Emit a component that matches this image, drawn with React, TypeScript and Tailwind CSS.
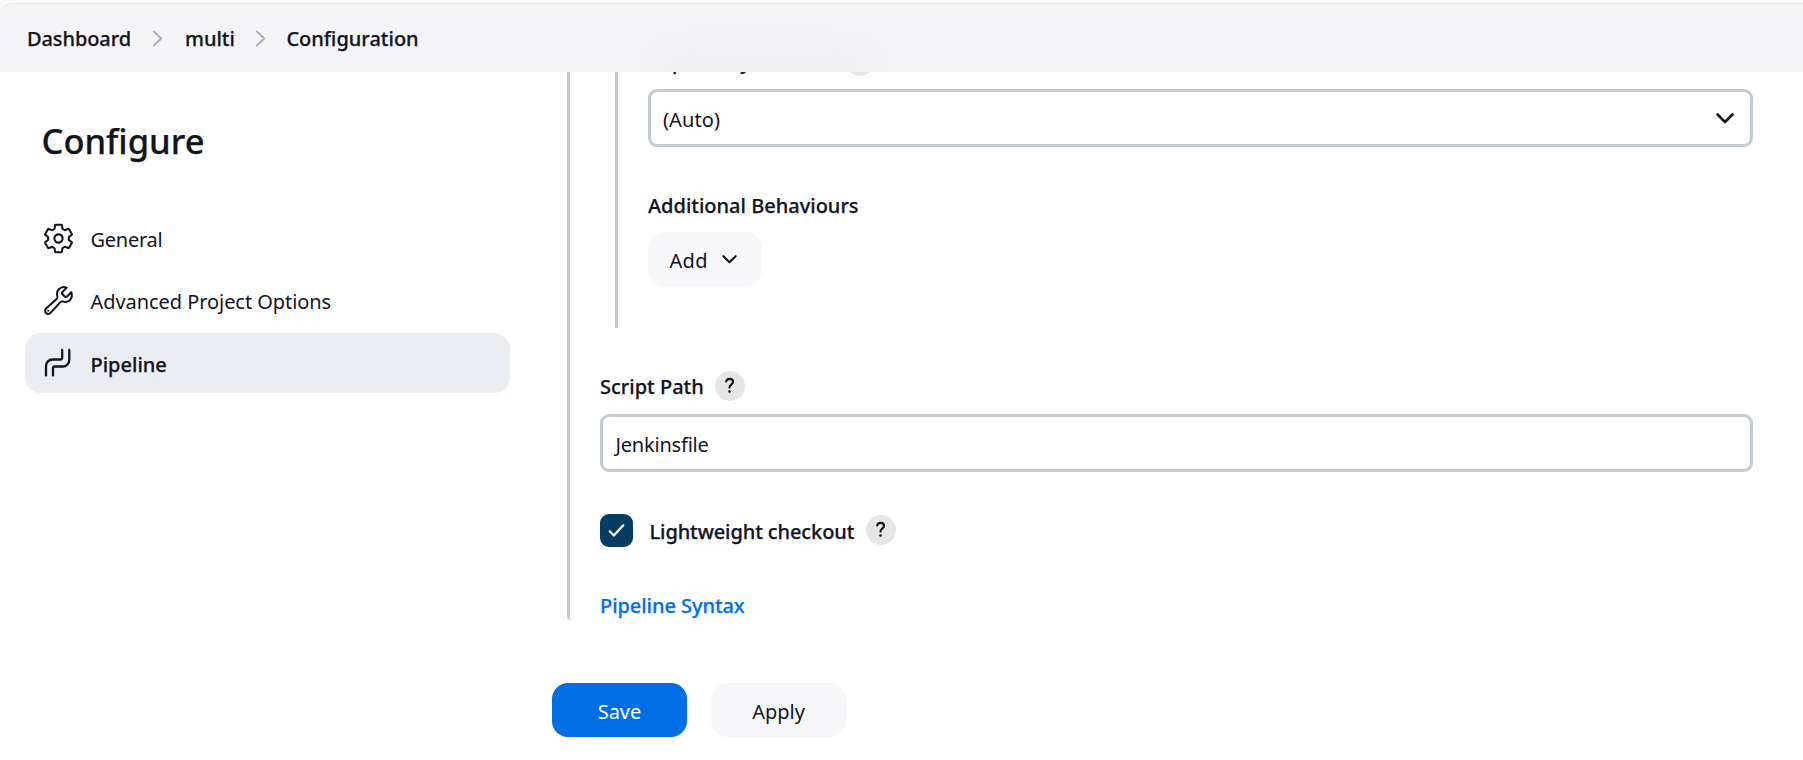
import type { ReactNode } from "react";
import { IoBuildOutline, IoSettingsOutline } from "react-icons/io5";

function Chevron({ className, width = 2, down = false }: { className: string; width?: number; down?: boolean }) {
  return (
    <svg className={className} viewBox={down ? "0 0 18 11" : "0 0 11 18"} fill="none" stroke="currentColor" strokeWidth={width} strokeLinecap="round" strokeLinejoin="round">
      <path d={down ? "M1.5 1.5 9 9l7.5-7.5" : "M1.5 1.5 9.5 9l-8 7.5"} />
    </svg>
  );
}

function PipelineIcon() {
  return (
    <svg className="h-[30px] w-[30px]" viewBox="0 0 30 30" fill="none" stroke="currentColor" strokeWidth="2.3" strokeLinecap="round" strokeLinejoin="round">
      <path d="M19.2 2V9.5a2 2 0 0 1-2 2H9.5A6.5 6.5 0 0 0 3 18V27.5" />
      <path d="M26.3 2V12a6.5 6.5 0 0 1-6.5 6.5H12a2 2 0 0 0-2 2V27.5" />
    </svg>
  );
}

function Help({ className = "" }: { className?: string }) {
  return (
    <button className={`flex h-[30px] w-[30px] items-center justify-center rounded-full bg-[#e6e6e6] ${className}`}>
      <svg className="h-[18px] w-[12px]" viewBox="0 0 12 18" fill="none" stroke="currentColor" strokeWidth="2.2" strokeLinecap="round" strokeLinejoin="round">
        <path d="M2.2 4.4C2.5 2.7 4 1.8 5.6 1.8c1.9 0 3.4 1.100 3.400 3 0 3-3.500 2.800-3.500 5.700" />
        <circle cx="5.5" cy="14.5" r=".7" fill="currentColor" strokeWidth="1.3" />
      </svg>
    </button>
  );
}

function Strong({ className = "", children }: { className?: string; children: ReactNode }) {
  return <span className={`font-medium [-webkit-text-stroke:0.25px_currentColor] ${className}`}>{children}</span>;
}

function NavItem({ icon, active = false, children }: { icon: ReactNode; active?: boolean; children: ReactNode }) {
  return (
    <a className={`flex h-[60px] items-center rounded-2xl pl-[16.5px] ${active ? "bg-[#ecedf3]" : ""}`}>
      <span className="mr-[16px] flex w-[33px] justify-center">{icon}</span>
      <span className="pt-[3px]">{children}</span>
    </a>
  );
}

export default function App() {
  return (
    <div className="relative h-[760px] overflow-hidden bg-white font-['Noto_Sans',sans-serif] text-[20px] leading-[28px] text-[#14141f]">
      <header className="absolute inset-x-0 top-0 z-10 h-[72px] overflow-hidden bg-[#f8f8f8] pt-[3px]">
        <nav className="flex h-[69px] items-center rounded-tl-xl border-t border-l border-[#e8e8e8] border-l-transparent bg-[#f5f5f8] pt-px pl-[26px]">
          <Strong className="tracking-[-0.1px]">Dashboard</Strong>
          <Chevron className="mr-[22px] mb-px ml-[21px] h-[17px] w-[11px] text-[#a9a9bd]" />
          <Strong>multi</Strong>
          <Chevron className="mr-[20.5px] mb-px ml-[20px] h-[17px] w-[11px] text-[#a9a9bd]" />
          <Strong>Configuration</Strong>
        </nav>
        <div className="absolute top-[46px] left-[650px] h-[40px] w-[225px] rounded-full bg-[#ededf0] opacity-80 blur-[16px]" />
      </header>

      <div className="flex h-full">
        <aside className="w-[510px] shrink-0 pt-[117px] pl-[25px]">
          <h1 className="pl-[16.5px] text-[34.5px] leading-[48px]">
            <Strong>Configure</Strong>
          </h1>
          <nav className="mt-[43px] flex flex-col gap-[2.5px]">
            <NavItem icon={<IoSettingsOutline className="h-[33px] w-[33px]" />}>
              <span className="tracking-[-0.25px]">General</span>
            </NavItem>
            <NavItem icon={<IoBuildOutline className="h-[33px] w-[33px]" />}>
              <span className="tracking-[-0.06px]">Advanced Project Options</span>
            </NavItem>
            <NavItem icon={<PipelineIcon />} active>
              <Strong>Pipeline</Strong>
            </NavItem>
          </nav>
        </aside>

        <main className="flex grow flex-col pr-[50px] pl-[42px]">
          <section className="ml-[15px] h-[620px] rounded-b-sm border-l-3 border-[#c3ccd1] pl-[30px]">
            <div className="ml-[15px] h-[328px] border-l-3 border-[#c3ccd1] pt-[46px] pl-[30px]">
              <div className="flex h-[30px] items-center">
                <Strong className="w-[197px] pt-[1px]">Repository browser</Strong>
                <Help />
              </div>
              <div className="mt-[13px] flex h-[58px] items-center justify-between rounded-[9px] border-3 border-[#c3ccd1] pr-[16px] pl-[12px]">
                <span className="pt-[3px] tracking-[0.1px]">(Auto)</span>
                <Chevron down width={2.6} className="h-[11px] w-[18px]" />
              </div>
              <div className="mt-[45px]">
                <Strong>Additional Behaviours</Strong>
              </div>
              <button className="mt-[12px] flex h-[54px] w-[114px] items-center rounded-2xl bg-[#f7f7fa] pl-[21.5px]">
                <span className="pt-[3px] tracking-[0.3px]">Add</span>
                <Chevron down width={2.6} className="ml-[14.5px] h-[9px] w-[15px]" />
              </button>
            </div>

            <div className="mt-[43px] flex h-[30px] items-center">
              <Strong className="w-[115px] pt-[1px]">Script Path</Strong>
              <Help />
            </div>
            <div className="mt-[13px] flex h-[58px] items-center rounded-[9px] border-3 border-[#c3ccd1] pl-[12.5px]">
              <span className="pt-[3px] tracking-[-0.2px]">Jenkinsfile</span>
            </div>

            <div className="mt-[42px] flex h-[33px] items-center">
              <span className="flex h-[33px] w-[33px] items-center justify-center rounded-[9px] bg-[#073d62] text-white">
                <svg className="h-[15px] w-[17px]" viewBox="0 0 17 15" fill="none" stroke="currentColor" strokeWidth="2.2" strokeLinecap="round" strokeLinejoin="round">
                  <path d="M1.7 8.3 5.8 12.5 15.3 2.3" />
                </svg>
              </span>
              <Strong className="ml-[16.5px] w-[216.5px] pt-[2px] tracking-[-0.1px]">Lightweight checkout</Strong>
              <Help className="mb-px" />
            </div>
            <a className="mt-[45px] block text-[#0070ea]">
              <Strong className="tracking-[-0.06px]">Pipeline Syntax</Strong>
            </a>
          </section>

          <div className="mt-[63px] flex gap-6">
            <button className="h-[54px] w-[135px] rounded-2xl bg-[#006fe6] pt-[3px] text-white">Save</button>
            <button className="h-[54px] w-[135px] rounded-2xl bg-[#f7f7fa] pt-[3px]">Apply</button>
          </div>
        </main>
      </div>
    </div>
  );
}
